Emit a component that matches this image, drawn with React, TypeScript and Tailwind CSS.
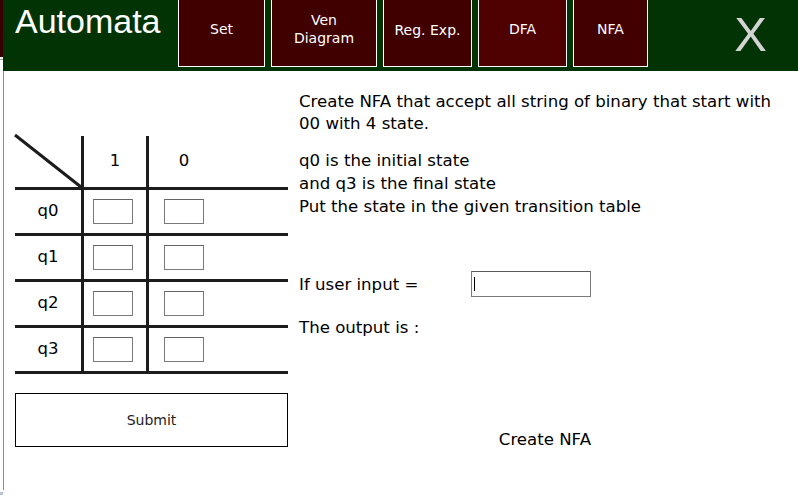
const buttons = [
  { label: ["Set"], w: "w-[87px]", bg: "bg-[#400000]", pt: "pt-0" },
  { label: ["Ven", "Diagram"], w: "w-[106px]", bg: "bg-[#400000]", pt: "pt-0" },
  { label: ["Reg. Exp."], w: "w-[89px]", bg: "bg-[#400000]", pt: "pt-[3px]" },
  { label: ["DFA"], w: "w-[89px]", bg: "bg-[#4f0000]", pt: "pt-[1px]" },
  { label: ["NFA"], w: "w-[75px]", bg: "bg-[#420000]", pt: "pt-[1px]" },
];

const rows = ["q0", "q1", "q2", "q3"];

function Cell() {
  return <div className="w-[40px] h-[25px] bg-white border border-[#7a7a7a] border-t-[#646464]" />;
}

export default function App() {
  return (
    <div
      className="w-[798px] h-[497px] bg-white flex overflow-hidden text-black"
      style={{ fontFamily: "'DejaVu Sans', sans-serif" }}
    >
      {/* left window edge */}
      <div className="w-[3px] flex flex-col">
        <div className="h-[57px] bg-[#3a0000]" />
        <div className="h-px mt-[2px] bg-[#9a9a9a]" />
        <div className="flex-1" />
        <div className="h-[3px] mb-[2px] bg-[#b9c3d3]" />
      </div>

      <div className="flex-1 flex flex-col">
        {/* header */}
        <div className="h-[71px] bg-[#023304] flex items-start">
          <div
            className="w-[175px] pl-[12px] pt-[2px] text-[34px] leading-[38px] text-white"
            style={{ fontFamily: "'Liberation Sans', Arial, sans-serif" }}
          >
            Automata
          </div>
          <div className="flex gap-[6px]">
            {buttons.map((b) => (
              <div
                key={b.label.join(" ")}
                className={`${b.w} ${b.bg} h-[67px] border-x border-b border-white flex items-center justify-center pb-[9px]`}
              >
                <div className={`${b.pt} text-white text-[14px] leading-[18px] text-center`}>
                  {b.label.map((l) => (
                    <div key={l}>{l}</div>
                  ))}
                </div>
              </div>
            ))}
          </div>
          <div
            className="ml-auto mr-[31px] mt-[10px] text-[49px] leading-none text-[#d4d4d4]"
            style={{ fontFamily: "'Liberation Sans', Arial, sans-serif" }}
          >
            X
          </div>
        </div>

        {/* body */}
        <div className="h-[419px] border-l border-[#8c8c8c] flex">
          {/* transition table */}
          <div className="w-[295px] pl-[11px] pt-[65px]">
            <div className="w-[273px] text-[16.5px] border-b-[3px] border-[#1c1c1c]">
              <div className="flex h-[51px]">
                <div className="w-[69px] border-r-[3px] border-[#1c1c1c]">
                  <svg width="66" height="51" viewBox="0 0 66 51" className="overflow-visible">
                    <line x1="0" y1="-1" x2="66" y2="51" stroke="#1c1c1c" strokeWidth="3" />
                  </svg>
                </div>
                <div className="w-[65px] border-r-[3px] border-[#1c1c1c] flex items-center justify-center">1</div>
                <div className="flex-1 flex items-center pl-[15px]">
                  <div className="w-[40px] text-center">0</div>
                </div>
              </div>
              {rows.map((r) => (
                <div key={r} className="flex h-[46px] border-t-[3px] border-[#1c1c1c]">
                  <div className="w-[69px] border-r-[3px] border-[#1c1c1c] flex items-center justify-center">{r}</div>
                  <div className="w-[65px] border-r-[3px] border-[#1c1c1c] flex items-center pl-[9px]">
                    <Cell />
                  </div>
                  <div className="flex-1 flex items-center pl-[15px]">
                    <Cell />
                  </div>
                </div>
              ))}
            </div>
            <div className="mt-[19px] w-[273px] h-[54px] border border-black flex items-center justify-center text-[14px] text-[#222]">
              Submit
            </div>
          </div>

          {/* question */}
          <div className="flex-1 pt-[20px] text-[16.6px]">
            <div className="leading-[22px]">
              <div className="whitespace-nowrap">Create NFA that accept all string of binary that start with</div>
              <div>00 with 4 state.</div>
            </div>
            <div className="mt-[14px] leading-[23px]">
              <div>q0 is the initial state</div>
              <div>and q3 is the final state</div>
              <div>Put the state in the given transition table</div>
            </div>
            <div className="mt-[53px] w-[292px] h-[26px] flex items-center leading-[22px]">
              <div className="w-[172px] pt-[2px]">If user input =</div>
              <div className="w-[120px] h-[26px] border border-[#7a7a7a] border-t-[#5a5a5a] flex items-center pl-[2px]">
                <div className="w-px h-[14px] bg-black" />
              </div>
            </div>
            <div className="mt-[20px] leading-[22px]">The output is :</div>
            <div className="mt-[90px] w-[292px] text-right leading-[22px]">Create NFA</div>
          </div>
        </div>
      </div>
    </div>
  );
}
